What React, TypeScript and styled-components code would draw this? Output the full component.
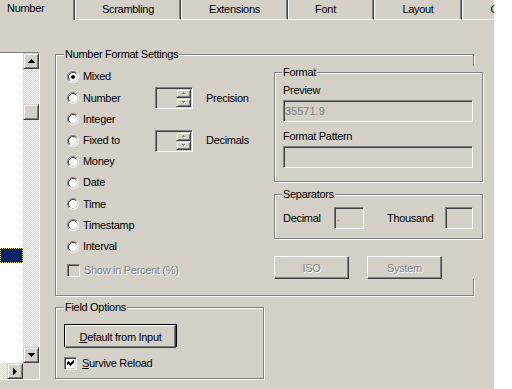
import styled, { createGlobalStyle } from "styled-components";

const face = "#d4d0c8";

const GlobalStyle = createGlobalStyle`
  html, body {
    margin: 0;
    padding: 0;
    background: #fff;
  }
`;

const raised = `
  border: 1px solid;
  border-color: #fff #404040 #404040 #fff;
  box-shadow: inset -1px -1px 0 #808080;
`;

const raisedSoft = `
  border: 1px solid;
  border-color: ${face} #404040 #404040 ${face};
  box-shadow: inset 1px 1px 0 #fff, inset -1px -1px 0 #808080;
`;

const sunken = `
  border: 1px solid;
  border-color: #808080 #fff #fff #808080;
  box-shadow: inset 1px 1px 0 #404040, inset -1px -1px 0 ${face};
`;

const checker = `
  background-color: #fff;
  background-image: repeating-conic-gradient(${face} 0% 25%, #fff 0% 50%);
  background-size: 2px 2px;
`;

const Window = styled.div`
  width: 494px;
  height: 389px;
  background: ${face};
  overflow: hidden;
  display: flex;
  flex-direction: column;
  font-family: "Liberation Sans", Arial, sans-serif;
  font-size: 11px;
  letter-spacing: -0.3px;
  color: #000;
`;

const TabStrip = styled.div`
  display: flex;
  height: 20px;
  flex-shrink: 0;
`;

const Tab = styled.div<{ $active?: boolean; $w: number; $padRight?: number }>`
  width: ${({ $w }) => $w}px;
  flex-shrink: 0;
  box-sizing: border-box;
  height: 20px;
  line-height: 13px;
  white-space: nowrap;
  overflow: hidden;
  border-right: 1px solid #404040;
  box-shadow: inset -1px 0 0 #808080;
  padding-top: ${({ $active }) => ($active ? 2 : 3)}px;
  padding-right: ${({ $padRight }) => $padRight ?? 0}px;
  text-align: ${({ $active }) => ($active ? "left" : "center")};
  padding-left: ${({ $active }) => ($active ? 7 : 0)}px;
  ${({ $active }) =>
    !$active &&
    `
    border-left: 1px solid #fff;
    border-bottom: 1px solid #fff;
  `}
`;

const Page = styled.div`
  display: flex;
  align-items: flex-start;
  flex: 1;
`;

const ListBox = styled.div`
  margin-top: 32px;
  width: 40px;
  height: 328px;
  flex-shrink: 0;
  box-sizing: border-box;
  border-top: 1px solid #808080;
  border-right: 1px solid #fff;
  border-bottom: 1px solid #fff;
  display: grid;
  grid-template-columns: 23px 16px;
  grid-template-rows: 1fr 16px;
`;

const ListItems = styled.div`
  background: #fff;
  overflow: hidden;
`;

const SelectedItem = styled.div`
  margin-top: 195px;
  height: 15px;
  background: #0a246a;
  outline: 1px dotted #e6dc9a;
  outline-offset: -1px;
`;

const VScroll = styled.div`
  ${checker}
  display: flex;
  flex-direction: column;
`;

const HScroll = styled.div`
  ${checker}
  display: flex;
  justify-content: flex-end;
`;

const Corner = styled.div`
  background: ${face};
`;

const ScrollButton = styled.div<{ $gap?: number }>`
  ${raisedSoft}
  box-sizing: border-box;
  width: 16px;
  height: 16px;
  flex-shrink: 0;
  background: ${face};
  display: flex;
  align-items: center;
  justify-content: center;
  margin-top: ${({ $gap }) => $gap ?? 0}px;
`;

const Filler = styled.div`
  flex: 1;
`;

const MainColumn = styled.div`
  margin-left: 15px;
  display: flex;
  flex-direction: column;
`;

const GroupBox = styled.div<{ $w: number; $h: number; $top: number }>`
  position: relative;
  box-sizing: border-box;
  width: ${({ $w }) => $w}px;
  height: ${({ $h }) => $h}px;
  margin-top: ${({ $top }) => $top}px;
  flex-shrink: 0;
  border: 1px solid #808080;
  box-shadow: 1px 1px 0 #fff, inset 1px 1px 0 #fff;
`;

const Legend = styled.span<{ $left: number }>`
  position: absolute;
  top: -7px;
  left: ${({ $left }) => $left}px;
  padding: 0 1px;
  line-height: 13px;
  background: ${face};
  white-space: nowrap;
`;

const NumberLayout = styled.div`
  display: flex;
  align-items: flex-start;
  padding-left: 11px;
`;

const Options = styled.div`
  width: 207px;
  flex-shrink: 0;
  margin-top: 11px;
`;

const OptionRow = styled.div`
  display: grid;
  grid-template-columns: 88px 38px auto;
  align-items: center;
  height: 21.25px;
`;

const Choice = styled.div<{ $disabled?: boolean }>`
  display: flex;
  align-items: center;
  gap: 4px;
  line-height: 13px;
  color: ${({ $disabled }) => ($disabled ? "#808080" : "#000")};
  text-shadow: ${({ $disabled }) => ($disabled ? "1px 1px 0 #fff" : "none")};
  white-space: nowrap;
`;

const PercentRow = styled.div`
  margin-top: 3px;
  height: 21px;
  display: flex;
  align-items: center;
`;

const SideLabel = styled.span`
  padding-left: 13px;
  line-height: 13px;
`;

const SpinBox = styled.div`
  ${sunken}
  box-sizing: border-box;
  width: 38px;
  height: 22px;
  background: ${face};
  display: flex;
  flex-direction: column;
  align-items: flex-end;
  padding: 1px 1px;
`;

const SpinButton = styled.div`
  ${raisedSoft}
  box-sizing: border-box;
  width: 15px;
  height: 9px;
  display: flex;
  align-items: center;
  justify-content: center;
  background: ${face};
`;

const RightColumn = styled.div`
  width: 209px;
  flex-shrink: 0;
  margin-top: 11px;
  padding-top: 6px;
  background: ${face};
  display: flex;
  flex-direction: column;
`;

const FormatBody = styled.div`
  padding: 11px 0 0 8px;
  display: flex;
  flex-direction: column;
`;

const FieldLabel = styled.span<{ $top?: number }>`
  line-height: 13px;
  margin-top: ${({ $top }) => $top ?? 0}px;
`;

const TextField = styled.div<{ $w: number }>`
  ${sunken}
  box-sizing: border-box;
  width: ${({ $w }) => $w}px;
  height: 22px;
  margin-top: 3px;
  background: ${face};
  color: #808080;
  padding-left: 1px;
  line-height: 20px;
  letter-spacing: 0;
`;

const SeparatorRow = styled.div`
  display: flex;
  align-items: center;
  padding: 12px 0 0 8px;
  height: 22px;
`;

const SepLabel = styled.span<{ $w: number; $left?: number }>`
  width: ${({ $w }) => $w}px;
  margin-left: ${({ $left }) => $left ?? 0}px;
  line-height: 13px;
`;

const SepField = styled.div<{ $w: number }>`
  ${sunken}
  box-sizing: border-box;
  width: ${({ $w }) => $w}px;
  height: 22px;
  background: ${face};
  color: #808080;
  padding-left: 2px;
  line-height: 18px;
`;

const ButtonRow = styled.div`
  display: flex;
  gap: 18px;
  margin-top: 17px;
`;

const PushButton = styled.div<{ $disabled?: boolean; $w: number }>`
  ${raised}
  box-sizing: border-box;
  width: ${({ $w }) => $w}px;
  height: 23px;
  display: flex;
  align-items: center;
  justify-content: center;
  background: ${face};
  color: ${({ $disabled }) => ($disabled ? "#808080" : "#000")};
  text-shadow: ${({ $disabled }) => ($disabled ? "1px 1px 0 #fff" : "none")};
`;

const DefaultFrame = styled.div`
  border: 1px solid #000;
  width: 113px;
  height: 23px;
  box-sizing: border-box;
  display: flex;
`;

const FieldBody = styled.div`
  padding: 16px 0 0 8px;
  display: flex;
  flex-direction: column;
`;

const CheckRow = styled.div`
  margin-top: 10px;
`;

const CheckBox = styled.div<{ $disabled?: boolean }>`
  ${sunken}
  box-sizing: border-box;
  width: 13px;
  height: 13px;
  flex-shrink: 0;
  background: ${({ $disabled }) => ($disabled ? face : "#fff")};
  display: flex;
  align-items: center;
  justify-content: center;
`;

function Arrow({ dir, color = "#000" }: { dir: "up" | "down" | "right"; color?: string }) {
  if (dir === "right") {
    return (
      <svg width="4" height="7" viewBox="0 0 4 7" shapeRendering="crispEdges">
        <path d="M0 0h1v7h-1z M1 1h1v5h-1z M2 2h1v3h-1z M3 3h1v1h-1z" fill={color} />
      </svg>
    );
  }
  const d =
    dir === "up"
      ? "M3 0h1v1h-1z M2 1h3v1h-3z M1 2h5v1h-5z M0 3h7v1h-7z"
      : "M0 0h7v1h-7z M1 1h5v1h-5z M2 2h3v1h-3z M3 3h1v1h-1z";
  return (
    <svg width="7" height="4" viewBox="0 0 7 4" shapeRendering="crispEdges">
      <path d={d} fill={color} />
    </svg>
  );
}

function SmallArrow({ up }: { up: boolean }) {
  const d = up ? "M2 0h1v1h-1z M1 1h3v1h-3z" : "M1 0h3v1h-3z M2 1h1v1h-1z";
  return (
    <svg width="6" height="3" viewBox="0 0 6 3" shapeRendering="crispEdges">
      <path d={d} transform="translate(1 1)" fill="#fff" />
      <path d={d} fill="#808080" />
    </svg>
  );
}

function Radio({ checked }: { checked?: boolean }) {
  return (
    <svg width="12" height="12" viewBox="0 0 12 12">
      <circle cx="6" cy="6" r="4.5" fill="#fff" />
      <path d="M2.11 9.89 A5.5 5.5 0 0 1 9.89 2.11" fill="none" stroke="#808080" strokeWidth="1" />
      <path d="M9.89 2.11 A5.5 5.5 0 0 1 2.11 9.89" fill="none" stroke="#fff" strokeWidth="1" />
      <path d="M2.82 9.18 A4.5 4.5 0 0 1 9.18 2.82" fill="none" stroke="#404040" strokeWidth="1" />
      <path d="M9.18 2.82 A4.5 4.5 0 0 1 2.82 9.18" fill="none" stroke={face} strokeWidth="1" />
      {checked && <circle cx="6" cy="6" r="2" fill="#000" />}
    </svg>
  );
}

function Check() {
  return (
    <svg width="7" height="7" viewBox="0 0 7 7" shapeRendering="crispEdges">
      <path
        d="M6 0h1v3h-1z M5 1h1v3h-1z M4 2h1v3h-1z M3 3h1v3h-1z M2 2h1v3h-1z M1 1h1v3h-1z M0 2h1v3h-1z"
        fill="#000"
      />
    </svg>
  );
}

function Spinner() {
  return (
    <SpinBox>
      <SpinButton>
        <SmallArrow up />
      </SpinButton>
      <SpinButton>
        <SmallArrow up={false} />
      </SpinButton>
    </SpinBox>
  );
}

const formats = [
  { label: "Mixed", checked: true },
  { label: "Number", spin: "Precision" },
  { label: "Integer" },
  { label: "Fixed to", spin: "Decimals" },
  { label: "Money" },
  { label: "Date" },
  { label: "Time" },
  { label: "Timestamp" },
  { label: "Interval" },
];

const tabs = [
  { label: "Number", w: 75, active: true },
  { label: "Scrambling", w: 106 },
  { label: "Extensions", w: 107 },
  { label: "Font", w: 86, padRight: 11 },
  { label: "Layout", w: 88 },
  { label: "Output", w: 88 },
];

export default function App() {
  return (
    <>
      <GlobalStyle />
      <Window>
        <TabStrip>
          {tabs.map((t) => (
            <Tab key={t.label} $w={t.w} $active={t.active} $padRight={t.padRight}>
              {t.label}
            </Tab>
          ))}
        </TabStrip>
        <Page>
          <ListBox>
            <ListItems>
              <SelectedItem />
            </ListItems>
            <VScroll>
              <ScrollButton>
                <Arrow dir="up" />
              </ScrollButton>
              <ScrollButton $gap={35} />
              <Filler />
              <ScrollButton>
                <Arrow dir="down" />
              </ScrollButton>
            </VScroll>
            <HScroll>
              <ScrollButton>
                <Arrow dir="right" />
              </ScrollButton>
            </HScroll>
            <Corner />
          </ListBox>

          <MainColumn>
            <GroupBox $w={419} $h={242} $top={34}>
              <Legend $left={8}>Number Format Settings</Legend>
              <NumberLayout>
                <Options>
                  {formats.map((f) => (
                    <OptionRow key={f.label}>
                      <Choice>
                        <Radio checked={f.checked} />
                        <span>{f.label}</span>
                      </Choice>
                      {f.spin && (
                        <>
                          <Spinner />
                          <SideLabel>{f.spin}</SideLabel>
                        </>
                      )}
                    </OptionRow>
                  ))}
                  <PercentRow>
                    <Choice $disabled>
                      <CheckBox $disabled />
                      <span>Show in Percent (%)</span>
                    </Choice>
                  </PercentRow>
                </Options>

                <RightColumn>
                  <GroupBox $w={209} $h={110} $top={0}>
                    <Legend $left={7}>Format</Legend>
                    <FormatBody>
                      <FieldLabel>Preview</FieldLabel>
                      <TextField $w={190}>35571.9</TextField>
                      <FieldLabel $top={8}>Format Pattern</FieldLabel>
                      <TextField $w={190} />
                    </FormatBody>
                  </GroupBox>
                  <GroupBox $w={209} $h={45} $top={12}>
                    <Legend $left={7}>Separators</Legend>
                    <SeparatorRow>
                      <SepLabel $w={51}>Decimal</SepLabel>
                      <SepField $w={30}>.</SepField>
                      <SepLabel $w={58} $left={23}>
                        Thousand
                      </SepLabel>
                      <SepField $w={28} />
                    </SeparatorRow>
                  </GroupBox>
                  <ButtonRow>
                    <PushButton $w={75} $disabled>
                      ISO
                    </PushButton>
                    <PushButton $w={75} $disabled>
                      System
                    </PushButton>
                  </ButtonRow>
                </RightColumn>
              </NumberLayout>
            </GroupBox>

            <GroupBox $w={209} $h={72} $top={11}>
              <Legend $left={8}>Field Options</Legend>
              <FieldBody>
                <DefaultFrame>
                  <PushButton $w={111}>
                    <span>
                      <u>D</u>efault from Input
                    </span>
                  </PushButton>
                </DefaultFrame>
                <CheckRow>
                  <Choice>
                    <CheckBox>
                      <Check />
                    </CheckBox>
                    <span style={{ marginLeft: 1 }}>
                      <u>S</u>urvive Reload
                    </span>
                  </Choice>
                </CheckRow>
              </FieldBody>
            </GroupBox>
          </MainColumn>
        </Page>
      </Window>
    </>
  );
}
